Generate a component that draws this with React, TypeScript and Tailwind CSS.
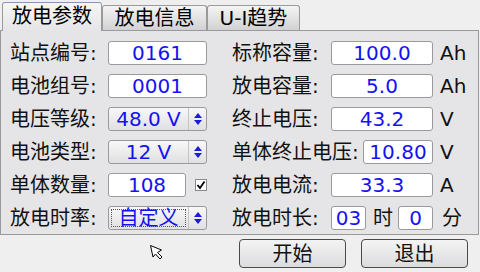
import React from 'react'

const BLUE = 'text-[#1212f2]'

function Field({ w, children }: { w: string; children: React.ReactNode }) {
  return (
    <div
      className={`${w} flex h-6 items-center justify-center rounded-[3px] border border-[#9a9a9a] bg-white ${BLUE}`}
    >
      {children}
    </div>
  )
}

function Combo({ value, focused = false }: { value: string; focused?: boolean }) {
  return (
    <div className="flex h-6 w-[99px] rounded-[3px] border border-[#9a9a9a] bg-gradient-to-b from-[#f8f8f8] to-[#e0e0e2]">
      <div className="flex flex-1 items-center justify-center p-[2px]">
        <div
          className={`flex h-full w-full items-center justify-center ${BLUE} ${
            focused ? 'border border-dotted border-[#555]' : ''
          }`}
        >
          {value}
        </div>
      </div>
      <div className="flex w-[18px] flex-col items-center justify-center gap-[2px] border-l border-[#c4c4c4]">
        <svg width="8" height="5" viewBox="0 0 8 5">
          <polygon points="4,0 8,5 0,5" fill="#1a1ae0" />
        </svg>
        <svg width="8" height="5" viewBox="0 0 8 5">
          <polygon points="0,0 8,0 4,5" fill="#1a1ae0" />
        </svg>
      </div>
    </div>
  )
}

function Label({ w = 'w-[98px]', children }: { w?: string; children: React.ReactNode }) {
  return <div className={`${w} shrink-0 whitespace-nowrap text-[#111]`}>{children}</div>
}

function Unit({ children }: { children: React.ReactNode }) {
  return <div className="ml-[7px] text-[#111]">{children}</div>
}

function Tab({ label, active = false, w }: { label: string; active?: boolean; w: string }) {
  if (active) {
    return (
      <div
        className={`${w} relative z-10 -mb-px flex h-[29px] items-center justify-center rounded-t-[3px] border-x border-t border-[#9a9a9a] border-t-[#8696b4] bg-gradient-to-b from-[#f6f6f6] to-[#e5e5e7] pb-[2px]`}
      >
        {label}
      </div>
    )
  }
  return (
    <div
      className={`${w} flex h-[25px] items-center justify-center rounded-t-[3px] border-x border-t border-[#9a9a9a] bg-gradient-to-b from-[#f4f4f4] to-[#d2d2d4]`}
    >
      {label}
    </div>
  )
}

function Checkbox() {
  return (
    <div className="flex h-[12px] w-[12px] items-center justify-center border border-[#8a8a8a] bg-white">
      <svg width="10" height="10" viewBox="0 0 10 10">
        <path d="M1.5 5 L4 8 L8.5 1.5" stroke="#000" strokeWidth="1.8" fill="none" />
      </svg>
    </div>
  )
}

function Button({ children }: { children: React.ReactNode }) {
  return (
    <div className="flex h-[29px] w-[107px] items-center justify-center rounded-[4px] border border-[#4a4a4a] bg-gradient-to-b from-[#f4f4f4] to-[#dcdcde] text-[#111]">
      {children}
    </div>
  )
}

export default function App() {
  return (
    <div className="relative h-[272px] w-[480px] overflow-hidden bg-[#efefef] font-['DejaVu_Sans','Noto_Sans_CJK_SC',sans-serif] text-[20px] leading-none">
      {/* Tabs */}
      <div className="flex h-[30px] items-end pl-[2px]">
        <Tab label="放电参数" active w="w-[100px]" />
        <Tab label="放电信息" w="w-[105px]" />
        <Tab label="U-I趋势" w="w-[93px]" />
      </div>

      {/* Panel */}
      <div className="h-[205px] w-[479px] border border-[#9a9a9a] bg-[#e5e5e7]">
        <div className="flex flex-col gap-[9px] pl-[9px] pt-[10px]">
          <div className="flex h-6 items-center">
            <Label>站点编号:</Label>
            <Field w="w-[99px]">0161</Field>
            <div className="ml-[25px]" />
            <Label w="w-[99px]">标称容量:</Label>
            <Field w="w-[102px]">100.0</Field>
            <Unit>Ah</Unit>
          </div>
          <div className="flex h-6 items-center">
            <Label>电池组号:</Label>
            <Field w="w-[99px]">0001</Field>
            <div className="ml-[25px]" />
            <Label w="w-[99px]">放电容量:</Label>
            <Field w="w-[102px]">5.0</Field>
            <Unit>Ah</Unit>
          </div>
          <div className="flex h-6 items-center">
            <Label>电压等级:</Label>
            <Combo value="48.0 V" />
            <div className="ml-[25px]" />
            <Label w="w-[99px]">终止电压:</Label>
            <Field w="w-[102px]">43.2</Field>
            <Unit>V</Unit>
          </div>
          <div className="flex h-6 items-center">
            <Label>电池类型:</Label>
            <Combo value="12 V" />
            <div className="ml-[25px]" />
            <Label w="w-[131px]">单体终止电压:</Label>
            <Field w="w-[70px]">10.80</Field>
            <Unit>V</Unit>
          </div>
          <div className="flex h-6 items-center">
            <Label>单体数量:</Label>
            <div className="flex w-[99px] items-center">
              <Field w="w-[79px]">108</Field>
              <div className="ml-[9px]">
                <Checkbox />
              </div>
            </div>
            <div className="ml-[25px]" />
            <Label w="w-[99px]">放电电流:</Label>
            <Field w="w-[102px]">33.3</Field>
            <Unit>A</Unit>
          </div>
          <div className="flex h-6 items-center">
            <Label>放电时率:</Label>
            <Combo value="自定义" focused />
            <div className="ml-[25px]" />
            <Label w="w-[99px]">放电时长:</Label>
            <Field w="w-[35px]">03</Field>
            <div className="ml-[7px] w-[19px] text-[#111]">时</div>
            <div className="ml-[6px]" />
            <Field w="w-[35px]">0</Field>
            <div className="ml-[9px] text-[#111]">分</div>
          </div>
        </div>
      </div>

      {/* Buttons */}
      <div className="mt-[4px] flex justify-end gap-[15px] pr-[12px]">
        <Button>开始</Button>
        <Button>退出</Button>
      </div>

      {/* Mouse pointer */}
      <svg className="absolute left-[150px] top-[245px]" width="18" height="18" viewBox="0 0 18 18">
        <path
          d="M0.5 0.5 L3 12 L5.5 9 L10 14 L12 12 L7.5 7.5 L11.5 5 Z"
          fill="#fff"
          stroke="#000"
          strokeWidth="1"
          strokeLinejoin="round"
        />
      </svg>
    </div>
  )
}
